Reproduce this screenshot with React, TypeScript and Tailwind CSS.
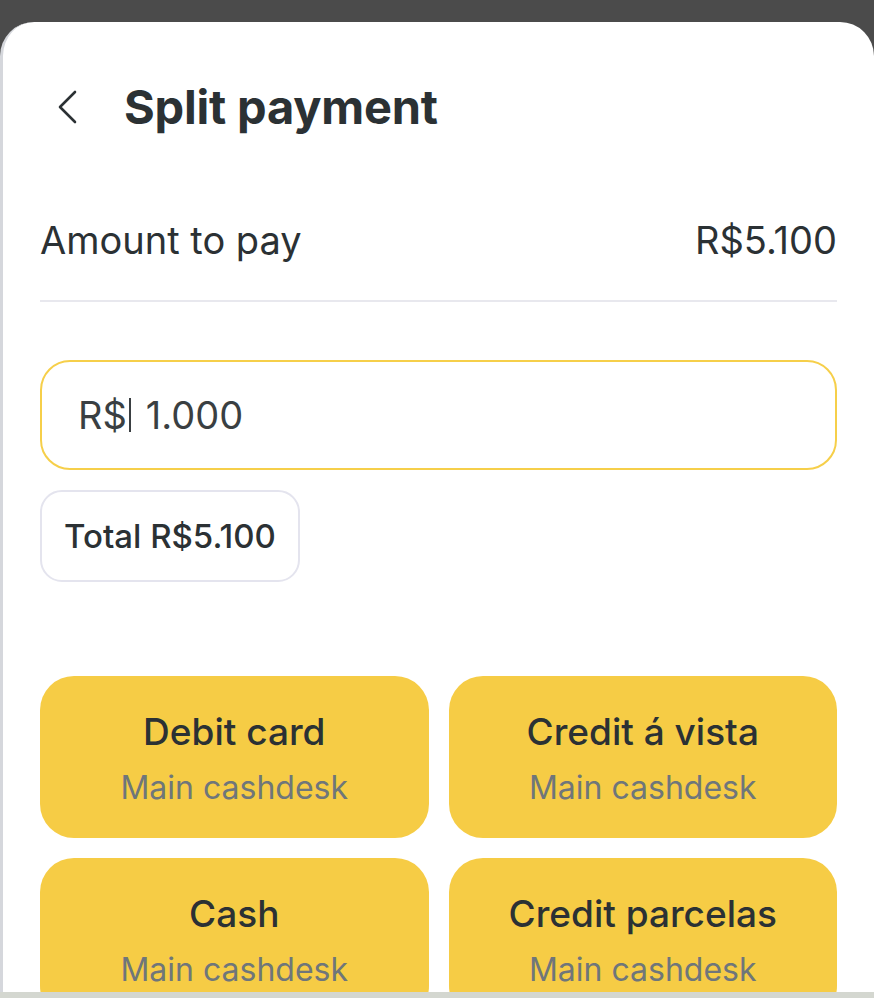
type Method = {
  title: string;
  place: string;
};

const methods: Method[] = [
  { title: "Debit card", place: "Main cashdesk" },
  { title: "Credit á vista", place: "Main cashdesk" },
  { title: "Cash", place: "Main cashdesk" },
  { title: "Credit parcelas", place: "Main cashdesk" },
];

const MethodTile = ({ data }: { data: Method }) => {
  return (
    <button className="flex h-[162px] flex-col items-center justify-center rounded-[34px] bg-[#f6cc45] pt-[4px]">
      <span className="text-[37px] font-medium leading-[44px] text-[#2b3134]">{data.title}</span>
      <span className="mt-[14px] text-[32px] leading-[40px] text-[#6f767a]">{data.place}</span>
    </button>
  );
};

export default function App() {
  return (
    <div
      className="flex h-[998px] w-full flex-col overflow-hidden bg-[#4b4b4b]"
      style={{ fontFamily: "Inter, 'Noto Sans', sans-serif" }}
    >
      <div className="h-[22px] shrink-0" />
      <div className="flex-1 overflow-hidden rounded-t-[34px] border-l-[3px] border-[#d5d7dc] bg-white px-[37px] text-[#2b3134]">
        <div className="mt-[60px] flex h-[50px] items-center">
          <svg width="22" height="36" viewBox="0 0 22 36" className="ml-[17px]" fill="none">
            <polyline
              points="18,3 3,18 18,33"
              stroke="#2b3134"
              strokeWidth="2.6"
              strokeLinecap="round"
              strokeLinejoin="round"
            />
          </svg>
          <h1 className="ml-[45px] text-[47px] font-bold leading-[50px] tracking-[-0.2px]">Split payment</h1>
        </div>

        <div className="mt-[86px] flex items-center justify-between">
          <span className="text-[38px] leading-[44px]">Amount to pay</span>
          <span className="text-[38px] leading-[44px]">R$5.100</span>
        </div>
        <div className="mt-[38px] h-[2px] bg-[#e8e8ee]" />

        <div className="mt-[58px] flex h-[110px] items-center rounded-[30px] border-2 border-[#f6cf4a] px-[36px]">
          <span className="text-[38px] leading-[44px] text-[#3a3f42]">R$</span>
          <span className="ml-[2px] h-[34px] w-[2px] bg-[#3a3f42]" />
          <span className="ml-[15px] text-[38px] leading-[44px] text-[#3a3f42]">1.000</span>
        </div>

        <div className="mt-[20px] inline-flex h-[92px] items-center rounded-[22px] border-2 border-[#e4e4ee] px-[22px]">
          <span className="text-[33px] font-medium leading-[40px]">Total R$5.100</span>
        </div>

        <div className="mt-[94px] grid grid-cols-2 gap-[20px]">
          {methods.map((m) => (
            <MethodTile key={m.title} data={m} />
          ))}
        </div>
      </div>
      <div className="h-[6px] shrink-0 bg-[#d4d7d0]" />
    </div>
  );
}
